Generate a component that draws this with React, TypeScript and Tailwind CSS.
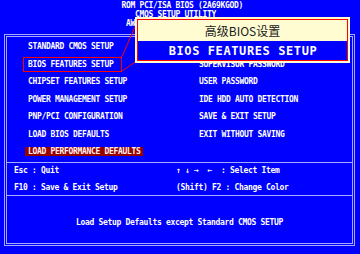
const mono = "font-['DejaVu_Sans_Mono','Liberation_Mono',monospace]"

const leftItems = [
  'STANDARD CMOS SETUP',
  'BIOS FEATURES SETUP',
  'CHIPSET FEATURES SETUP',
  'POWER MANAGEMENT SETUP',
  'PNP/PCI CONFIGURATION',
  'LOAD BIOS DEFAULTS',
]

const rightItems = [
  'INTEGRATED PERIPHERALS',
  'SUPERVISOR PASSWORD',
  'USER PASSWORD',
  'IDE HDD AUTO DETECTION',
  'SAVE & EXIT SETUP',
  'EXIT WITHOUT SAVING',
]

function App() {
  return (
    <div
      className={`relative h-[254px] w-[360px] overflow-hidden bg-[#0000ff] text-[8px] font-bold tracking-[-0.32px] text-white ${mono}`}
    >
      {/* header */}
      <div className="whitespace-pre pt-[1px] leading-[9px]">
        <div className="pl-[121.5px]">ROM PCI/ISA BIOS (2A69KGOD)</div>
        <div className="pl-[135px]">CMOS SETUP UTILITY</div>
        <div className="pl-[126px]">AWARD SOFTWARE, INC.</div>
      </div>

      {/* double frame */}
      <div className="ml-[4px] mt-[6px] h-[212px] w-[351px] border border-[#a8a8ff] p-[1px]">
        <div className="flex h-full flex-col border border-[#a8a8ff]">
          <div className="grid h-[125px] grid-cols-[171px_1fr] pl-[21px] pt-[1px] leading-[17.5px]">
            <div className="flex flex-col whitespace-pre">
              {leftItems.map((item) => (
                <div key={item}>{item}</div>
              ))}
              <div className="flex h-[17.5px] items-center">
                <span className="-ml-[3px] inline-block bg-[#980000] px-[3px] leading-[9px] text-[#fff0f0]">
                  LOAD PERFORMANCE DEFAULTS
                </span>
              </div>
            </div>
            <div className="flex flex-col whitespace-pre">
              {rightItems.map((item) => (
                <div key={item}>{item}</div>
              ))}
            </div>
          </div>

          <div className="grid h-[33px] grid-cols-[162px_1fr] border-t border-[#a8a8ff] pl-[7px] pt-[2.5px] leading-[9px] whitespace-pre">
            <div className="flex flex-col gap-[8px]">
              <div>Esc : Quit</div>
              <div>F10 : Save &amp; Exit Setup</div>
            </div>
            <div className="flex flex-col gap-[8px]">
              <div>{'↑ ↓ →  ←  : Select Item'}</div>
              <div>(Shift) F2 : Change Color</div>
            </div>
          </div>

          <div className="flex flex-1 items-center justify-center border-t border-[#a8a8ff] pt-[6px] leading-[9px] whitespace-pre">
            Load Setup Defaults except Standard CMOS SETUP
          </div>
        </div>
      </div>

      {/* callout lines + box around the selected item */}
      <svg className="pointer-events-none absolute left-0 top-0" width="360" height="254">
        <rect x="23.5" y="57.5" width="98" height="14" fill="none" stroke="#ff0000" strokeWidth="1" />
        <line x1="121.5" y1="57.5" x2="135" y2="27" stroke="#ff0000" strokeWidth="1" />
        <line x1="121.5" y1="71.5" x2="135" y2="62" stroke="#ff0000" strokeWidth="1" />
      </svg>

      {/* popup label */}
      <div className="absolute left-[135px] top-[17px] h-[46px] w-[215px] bg-[#fffcd2] p-[2px]">
        <div className="flex h-full flex-col border border-[#ff0000]">
          <div className="flex h-[21px] items-center justify-center bg-[#fffcd2] font-['Noto_Sans_CJK_SC',sans-serif] text-[12px] font-normal tracking-normal text-[#1a1a1a]">
            高级BIOS设置
          </div>
          <div className="flex flex-1 items-center justify-center bg-[#0000ff] pl-[1px] text-[12px] font-bold tracking-[0.6px] text-white">
            BIOS FEATURES SETUP
          </div>
        </div>
      </div>
    </div>
  )
}

export default App
